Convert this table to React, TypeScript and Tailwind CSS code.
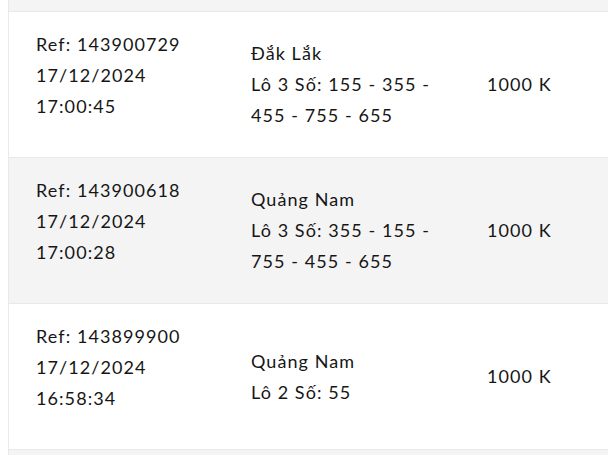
import React from 'react';

interface Ticket {
  ref: string;
  date: string;
  time: string;
  province: string;
  bet: string;
  amount: string;
}

const tickets: Ticket[] = [
  {
    ref: '143900729',
    date: '17/12/2024',
    time: '17:00:45',
    province: 'Đắk Lắk',
    bet: 'Lô 3 Số: 155 - 355 - 455 - 755 - 655',
    amount: '1000 K',
  },
  {
    ref: '143900618',
    date: '17/12/2024',
    time: '17:00:28',
    province: 'Quảng Nam',
    bet: 'Lô 3 Số: 355 - 155 - 755 - 455 - 655',
    amount: '1000 K',
  },
  {
    ref: '143899900',
    date: '17/12/2024',
    time: '16:58:34',
    province: 'Quảng Nam',
    bet: 'Lô 2 Số: 55',
    amount: '1000 K',
  },
];

function TicketRow({ ticket, striped }: { ticket: Ticket; striped: boolean }) {
  return (
    <div
      className={`flex items-center h-[146px] border-b border-[#e9e9e9] ${
        striped ? 'bg-[#f4f4f4]' : 'bg-white'
      }`}
    >
      <div className="w-[242px] shrink-0 pl-[27px] mb-[19px]">
        <div>Ref: {ticket.ref}</div>
        <div>{ticket.date}</div>
        <div>{ticket.time}</div>
      </div>
      <div className="w-[236px] shrink-0 pr-[40px]">
        <div>{ticket.province}</div>
        <div>{ticket.bet}</div>
      </div>
      <div className="flex-1">{ticket.amount}</div>
    </div>
  );
}

export default function App() {
  return (
    <div
      className="w-[608px] h-[455px] overflow-hidden bg-white pl-[8px] text-[18px] leading-[31px] tracking-[0.06em] text-[#161616]"
      style={{ fontFamily: 'Lato, "Noto Sans", sans-serif' }}
    >
      <div className="border-l border-[#e9e9e9] h-full">
        <div className="h-[12px] bg-[#f4f4f4] border-b border-[#e9e9e9]" />
        {tickets.map((t, i) => (
          <TicketRow key={t.ref} ticket={t} striped={i % 2 === 1} />
        ))}
        <div className="h-[20px] bg-[#f4f4f4]" />
      </div>
    </div>
  );
}
